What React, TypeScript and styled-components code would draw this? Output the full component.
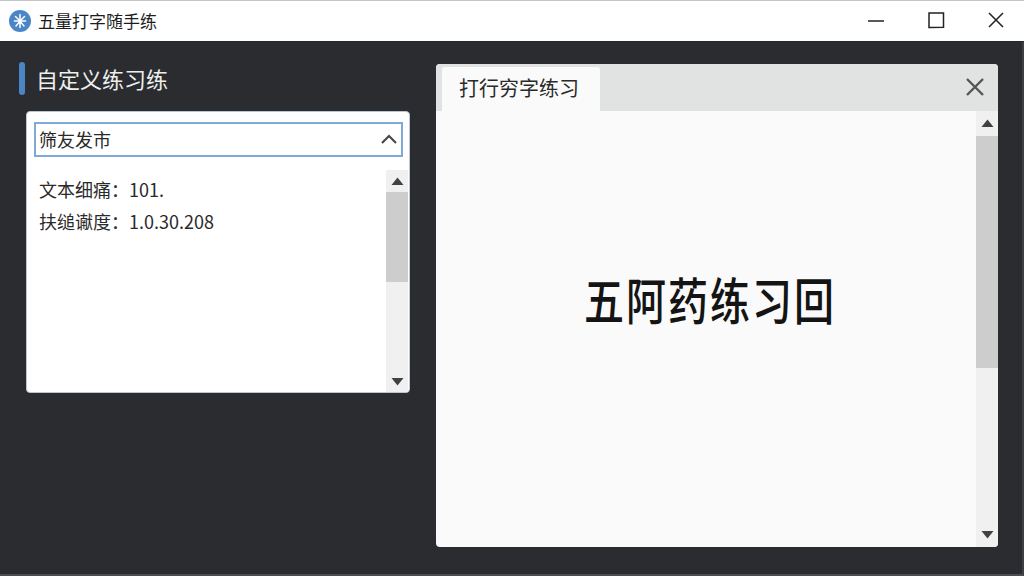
import styled, { createGlobalStyle } from "styled-components";

const GlobalStyle = createGlobalStyle`
  html, body {
    margin: 0;
    padding: 0;
    width: 1024px;
    height: 576px;
    overflow: hidden;
    background: #2a2c2f;
  }
  * {
    box-sizing: border-box;
  }
  body {
    font-family: "Noto Sans CJK SC", "Liberation Sans", sans-serif;
  }
`;

const ArrowIcon = ({ down }: { down?: boolean }) => (
    <svg width="13" height="9" viewBox="0 0 13 9">
        <path d={down ? "M.5 1H12.5L6.5 8.5Z" : "M.5 8H12.5L6.5 .5Z"} fill="#3f4245" />
    </svg>
);

type ScrollbarPropsType = {
    thumbHeight: number;
    buttonHeight: number;
};

const Scrollbar = (props: ScrollbarPropsType) => (
    <ScrollTrack>
        <ScrollButton $height={props.buttonHeight}>
            <ArrowIcon />
        </ScrollButton>
        <ScrollArea>
            <ScrollThumb $height={props.thumbHeight} />
        </ScrollArea>
        <ScrollButton $height={props.buttonHeight}>
            <ArrowIcon down />
        </ScrollButton>
    </ScrollTrack>
);

export default function App() {
    return (
        <>
            <GlobalStyle />
            <Window>
                <TitleBar>
                    <AppTitle>
                        <svg width="24" height="24" viewBox="0 0 24 24">
                            <circle cx="12" cy="12" r="11" fill="#4a86c5" />
                            <path
                                d="M12 5.5V18.5M6.5 12H17.5M7.5 7.5L10.5 10.5M16.5 7.5L13.5 10.5M8 17L11 13.5M16 17L13 13.5"
                                stroke="#fff"
                                strokeWidth="1.5"
                                strokeLinecap="round"
                                fill="none"
                            />
                        </svg>
                        <AppName>五量打字随手练</AppName>
                    </AppTitle>
                    <WindowControls>
                        <WindowButton>
                            <svg width="18" height="18" viewBox="0 0 18 18">
                                <path d="M1 10H17" stroke="#222" strokeWidth="1.5" />
                            </svg>
                        </WindowButton>
                        <WindowButton>
                            <svg width="18" height="18" viewBox="0 0 18 18">
                                <path d="M2 2H16.5V16.2L2 16.6Z" stroke="#222" strokeWidth="1.5" fill="none" />
                            </svg>
                        </WindowButton>
                        <WindowButton>
                            <svg width="18" height="18" viewBox="0 0 18 18">
                                <path d="M2 2L16 16M16 2L2 16" stroke="#222" strokeWidth="1.5" />
                            </svg>
                        </WindowButton>
                    </WindowControls>
                </TitleBar>
                <Content>
                    <LeftColumn>
                        <Heading>
                            <AccentBar />
                            <HeadingText>自定义练习练</HeadingText>
                        </Heading>
                        <InfoPanel>
                            <Combo>
                                <span>筛友发市</span>
                                <svg width="18" height="12" viewBox="0 0 18 12">
                                    <path d="M2 10L9 3L16 10" stroke="#444" strokeWidth="2" fill="none" />
                                </svg>
                            </Combo>
                            <ListArea>
                                <InfoList>
                                    <InfoRow>文本细痛：101.</InfoRow>
                                    <InfoRow>扶缒谳度：1.0.30.208</InfoRow>
                                </InfoList>
                                <Scrollbar thumbHeight={90} buttonHeight={22} />
                            </ListArea>
                        </InfoPanel>
                    </LeftColumn>
                    <PracticePanel>
                        <TabBar>
                            <Tab>打行穷字练习</Tab>
                            <TabClose>
                                <svg width="20" height="20" viewBox="0 0 20 20">
                                    <path d="M2 2L18 18M18 2L2 18" stroke="#555" strokeWidth="2.4" />
                                </svg>
                            </TabClose>
                        </TabBar>
                        <PracticeBody>
                            <PracticeCanvas>
                                <PracticeText>五阿药练习回</PracticeText>
                            </PracticeCanvas>
                            <Scrollbar thumbHeight={232} buttonHeight={25} />
                        </PracticeBody>
                    </PracticePanel>
                </Content>
            </Window>
        </>
    );
}

const Window = styled.div`
  width: 1024px;
  height: 576px;
  display: flex;
  flex-direction: column;
  background: #2a2c2f;
  border-right: 2px solid #3c3f44;
  border-bottom: 2px solid #4a4d52;
`;

const TitleBar = styled.header`
  height: 42px;
  flex: none;
  display: flex;
  align-items: center;
  justify-content: space-between;
  background: #fff;
  border-top: 1px solid #c4c4c4;
  border-bottom: 1px solid #26282b;
  margin-right: -2px;
  padding-left: 8px;
`;

const AppTitle = styled.div`
  display: flex;
  align-items: center;
  gap: 6px;
  font-size: 17px;
  color: #1d1d1d;
`;

const AppName = styled.span`
  padding-bottom: 2px;
`;

const WindowControls = styled.div`
  display: flex;
  height: 100%;
`;

const WindowButton = styled.div`
  width: 60px;
  height: 100%;
  padding: 0 0 2px 4px;
  display: flex;
  align-items: center;
  justify-content: center;
`;

const Content = styled.main`
  flex: 1;
  display: flex;
  align-items: flex-start;
  padding: 20px 24px 0 19px;
`;

const LeftColumn = styled.section`
  width: 391px;
  display: flex;
  flex-direction: column;
  gap: 16px;
  margin-right: 26px;
`;

const Heading = styled.div`
  height: 33px;
  display: flex;
  align-items: center;
  gap: 11px;
`;

const AccentBar = styled.div`
  width: 6px;
  height: 33px;
  border-radius: 3px;
  background: #4a86c5;
`;

const HeadingText = styled.h1`
  margin: 0;
  font-size: 22px;
  font-weight: 400;
  line-height: 33px;
  color: #eeeeee;
`;

const InfoPanel = styled.div`
  margin-left: 7px;
  width: 384px;
  height: 282px;
  display: flex;
  flex-direction: column;
  padding: 10px 1px 0 7px;
  background: #fff;
  border: 1px solid #b9c6d3;
  border-radius: 4px;
`;

const Combo = styled.div`
  height: 35px;
  flex: none;
  margin-right: 5px;
  display: flex;
  align-items: center;
  justify-content: space-between;
  padding: 0 3px 2px 3px;
  border: 2px solid #7fa9d6;
  font-size: 18px;
  color: #2a2a2a;
`;

const ListArea = styled.div`
  flex: 1;
  min-height: 0;
  margin-top: 13px;
  display: flex;
`;

const InfoList = styled.div`
  flex: 1;
  padding: 3px 0 0 5px;
`;

const InfoRow = styled.div`
  height: 32px;
  line-height: 32px;
  font-size: 18px;
  color: #2a2a2a;
`;

const ScrollTrack = styled.div`
  width: 22px;
  flex: none;
  display: flex;
  flex-direction: column;
  background: #f0f0f0;
`;

const ScrollButton = styled.div<{ $height: number }>`
  height: ${(props) => props.$height}px;
  flex: none;
  display: flex;
  align-items: center;
  justify-content: center;
`;

const ScrollArea = styled.div`
  flex: 1;
  min-height: 0;
  display: flex;
  flex-direction: column;
`;

const ScrollThumb = styled.div<{ $height: number }>`
  height: ${(props) => props.$height}px;
  background: #cdcdcd;
`;

const PracticePanel = styled.section`
  width: 562px;
  height: 483px;
  margin-top: 2px;
  display: flex;
  flex-direction: column;
  background: #fafafa;
  border-radius: 4px;
  overflow: hidden;
`;

const TabBar = styled.div`
  height: 47px;
  flex: none;
  display: flex;
  align-items: flex-end;
  justify-content: space-between;
  padding-left: 6px;
  background: #e1e2e2;
`;

const Tab = styled.div`
  width: 158px;
  height: 44px;
  padding-left: 17px;
  line-height: 42px;
  font-size: 20px;
  color: #2a2a2a;
  background: #fafafa;
  border-radius: 3px 3px 0 0;
`;

const TabClose = styled.div`
  width: 46px;
  height: 47px;
  padding-bottom: 1px;
  display: flex;
  align-items: center;
  justify-content: center;
`;

const PracticeBody = styled.div`
  flex: 1;
  min-height: 0;
  display: flex;
`;

const PracticeCanvas = styled.div`
  flex: 1;
  display: flex;
  align-items: center;
  justify-content: center;
  padding: 0 0 60px 8px;
`;

const PracticeText = styled.div`
  font-size: 40px;
  letter-spacing: 2px;
  font-weight: 500;
  color: #141414;
  transform: scaleY(1.25);
`;
